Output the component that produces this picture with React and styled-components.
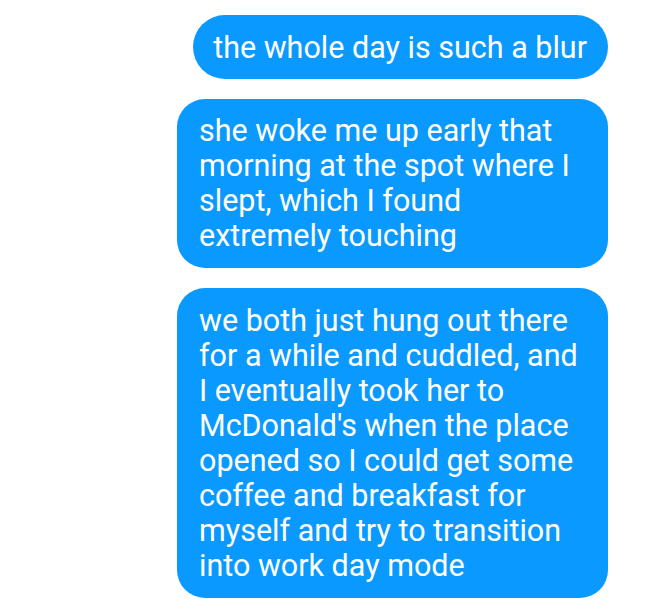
import React from "react";
import styled, { createGlobalStyle } from "styled-components";

const Global = createGlobalStyle`
  html, body { margin: 0; padding: 0; background: #ffffff; }
  body { font-family: Roboto, "Noto Sans", sans-serif; }
`;

const Thread = styled.div`
  display: flex;
  flex-direction: column;
  align-items: flex-end;
  gap: 20px;
  padding: 15px 40px 10px 0;
  width: 648px;
  box-sizing: border-box;
`;

const Bubble = styled.div`
  background: #0a99ff;
  color: #ffffff;
  font-size: 30.5px;
  line-height: 35px;
  max-width: 431px;
  box-sizing: border-box;
  padding: ${(p) => p.$pad};
  border-radius: ${(p) => (p.$single ? "32px" : "28px")};
`;

const messages = [
  { text: "the whole day is such a blur", single: true, pad: "15px 21px 14px 20px" },
  { text: "she woke me up early that morning at the spot where I slept, which I found extremely touching", pad: "14px 21px 15px 22px" },
  { text: "we both just hung out there for a while and cuddled, and I eventually took her to McDonald's when the place opened so I could get some coffee and breakfast for myself and try to transition into work day mode", pad: "15px 21px 15px 22px" },
];

export default function App() {
  return (
    <>
      <Global />
      <Thread>
        {messages.map((m, i) => (
          <Bubble key={i} $single={m.single} $pad={m.pad}>{m.text}</Bubble>
        ))}
      </Thread>
    </>
  );
}
